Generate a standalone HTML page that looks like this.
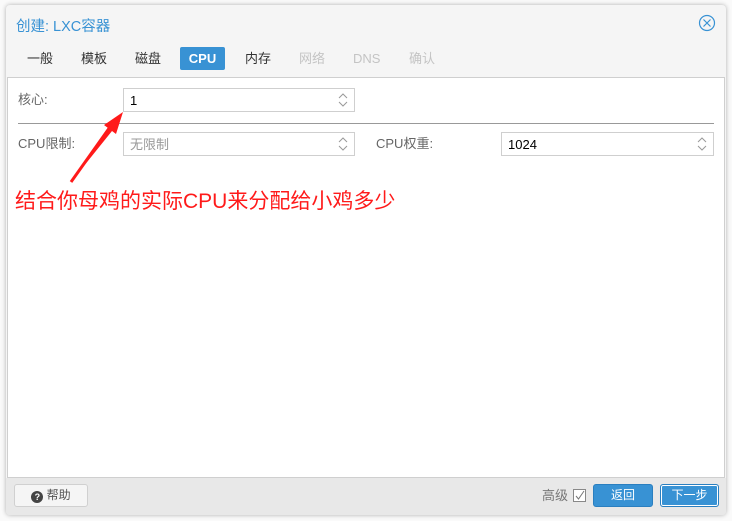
<!DOCTYPE html>
<html><head><meta charset="utf-8"><style>
*{box-sizing:border-box;margin:0;padding:0}
body{width:732px;height:521px;background:#fafafa;font-family:"Liberation Sans","Noto Sans CJK SC",sans-serif;font-size:13px;position:relative;overflow:hidden;color:#444}
.win{position:absolute;left:6px;top:5px;width:720px;height:510px;background:#f5f5f5;border-radius:4px;box-shadow:0 0 5px rgba(0,0,0,.3)}
.a{position:absolute}
.title{left:10px;top:10px;color:#3892d4;font-size:14.5px}
.tab{top:42px;height:23px;line-height:23px;font-size:13px;color:#333;padding:0 8px}
.dis{color:#c4c4c4}
.act{background:#3892d4;color:#fff;border-radius:2px;font-weight:bold}
.panel{left:1px;top:72px;width:718px;height:401px;background:#fff;border:1px solid #cfcfcf}
.lbl{color:#666;font-size:13px;line-height:16px}
.fld{height:24px;border:1px solid #cfcfcf;background:#fff;padding-left:6px;line-height:24px;font-size:13px;color:#000}
.sp{position:absolute;right:6px;top:3px}
.foot{left:0;top:473px;width:720px;height:37px;background:#e8e8e8;border-radius:0 0 4px 4px}
.btn{height:23px;line-height:21px;font-size:12px;text-align:center;border-radius:3px}
</style></head><body>
<div class="win">
<div class="a title">创建: LXC容器</div>
<svg class="a" style="left:692px;top:9px" width="18" height="18" viewBox="0 0 18 18"><circle cx="9" cy="9" r="7.5" fill="none" stroke="#3892d4" stroke-width="1.2"/><path d="M5.5 5.5L12.5 12.5M12.5 5.5L5.5 12.5" stroke="#3892d4" stroke-width="1.2"/></svg>
<div class="a tab" style="left:13px">一般</div>
<div class="a tab" style="left:67px">模板</div>
<div class="a tab" style="left:121px">磁盘</div>
<div class="a tab act" style="left:174px;width:45px;text-align:center;padding:0">CPU</div>
<div class="a tab" style="left:231px">内存</div>
<div class="a tab dis" style="left:285px">网络</div>
<div class="a tab dis" style="left:339px">DNS</div>
<div class="a tab dis" style="left:395px">确认</div>
<div class="a panel">
<div class="a lbl" style="left:10px;top:14px">核心:</div>
<div class="a fld" style="left:115px;top:10px;width:232px">1<svg class="sp" width="10" height="16" viewBox="0 0 10 16"><path d="M1 6L5 2L9 6M1 10L5 14L9 10" fill="none" stroke="#999"/></svg></div>
<div class="a" style="left:10px;top:45px;width:696px;height:1px;background:#999"></div>
<div class="a lbl" style="left:10px;top:58px">CPU限制:</div>
<div class="a fld" style="left:115px;top:54px;width:232px;color:#999">无限制<svg class="sp" width="10" height="16" viewBox="0 0 10 16"><path d="M1 6L5 2L9 6M1 10L5 14L9 10" fill="none" stroke="#999"/></svg></div>
<div class="a lbl" style="left:368px;top:58px">CPU权重:</div>
<div class="a fld" style="left:493px;top:54px;width:213px">1024<svg class="sp" width="10" height="16" viewBox="0 0 10 16"><path d="M1 6L5 2L9 6M1 10L5 14L9 10" fill="none" stroke="#999"/></svg></div>
<div class="a" style="left:7px;top:107px;color:#ff1a1a;font-size:21px;white-space:nowrap">结合你母鸡的实际CPU来分配给小鸡多少</div>
</div>
<div class="a foot">
<div class="a btn" style="left:8px;top:6px;width:74px;background:#f5f5f5;border:1px solid #d0d0d0;color:#555"><span style="display:inline-block;width:12px;height:12px;border-radius:50%;background:#444;color:#fff;font-size:9px;line-height:12px;font-weight:bold;vertical-align:-1px">?</span> 帮助</div>
<div class="a" style="left:536px;top:10px;color:#777;font-size:13px;line-height:16px">高级</div>
<div class="a" style="left:567px;top:11px;width:13px;height:13px;border:1px solid #888;background:#fff"><svg width="11" height="11" viewBox="0 0 11 11" style="display:block"><path d="M2 6L4.5 9L10 1" fill="none" stroke="#777"/></svg></div>
<div class="a btn" style="left:587px;top:6px;width:60px;background:#3892d4;border:1px solid #2a7fc0;color:#fff">返回</div>
<div class="a btn" style="left:654px;top:6px;width:59px;background:#3892d4;border:1px solid #2a7fc0;box-shadow:inset 0 0 0 1px #fff;color:#fff">下一步</div>
</div>
</div>
<svg class="a" style="left:0;top:0" width="732" height="521"><path d="M71 182L108 128L104 125L123 112L116 134L112 131Z" fill="#ff1a1a"/><path d="M71 182L110 127" stroke="#ff1a1a" stroke-width="3"/></svg>
</body></html>
